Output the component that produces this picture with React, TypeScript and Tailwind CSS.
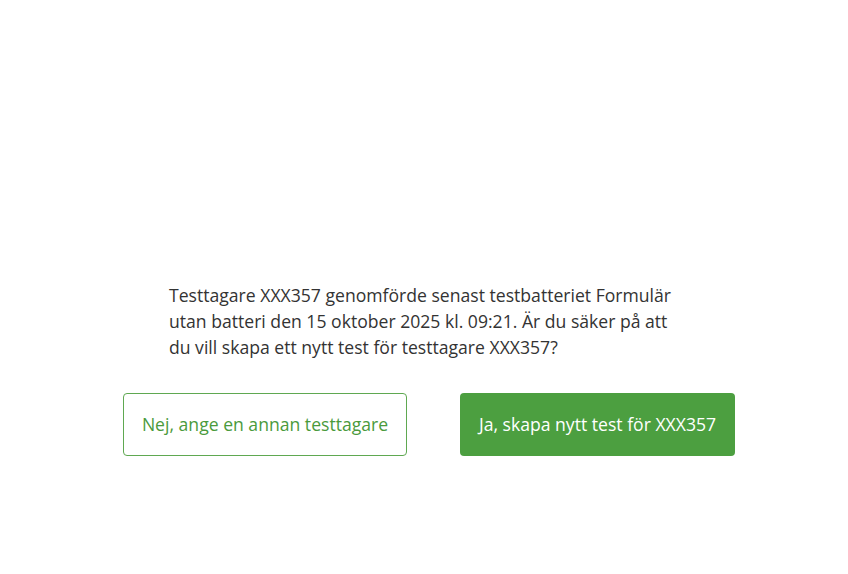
export default function App() {
  return (
    <div
      className="min-h-[574px] w-full bg-white text-[#333333]"
      style={{ fontFamily: '"Open Sans", "Noto Sans", sans-serif' }}
    >
      <div className="ml-[123px] w-[612px] pt-[282px]">
        <p className="w-[556px] pl-[46px] text-[17.6px] leading-[26px]">
          Testtagare XXX357 genomförde senast testbatteriet Formulär utan batteri den 15 oktober 2025 kl. 09:21. Är du säker på att du vill skapa ett nytt test för testtagare XXX357?
        </p>
        <div className="mt-[33px] flex justify-between">
          <button className="h-[63px] w-[284px] rounded-[4px] border border-[#5fa851] bg-white text-[17.6px] text-[#4a9a3c]">
            Nej, ange en annan testtagare
          </button>
          <button className="h-[63px] w-[275px] rounded-[4px] bg-[#4c9f40] text-[17.6px] text-white">
            Ja, skapa nytt test för XXX357
          </button>
        </div>
      </div>
    </div>
  );
}
